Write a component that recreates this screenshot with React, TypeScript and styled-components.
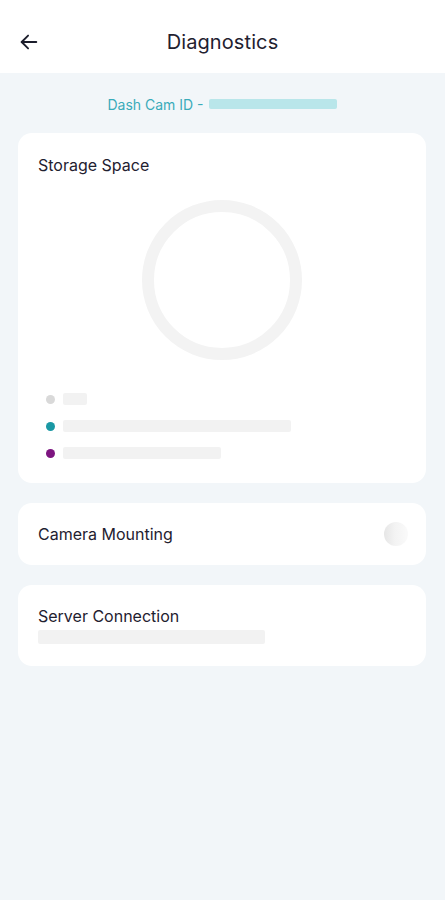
import React from 'react'
import styled, { createGlobalStyle } from 'styled-components'

const GlobalStyle = createGlobalStyle`
  html, body {
    margin: 0;
    padding: 0;
    background: #f2f6f9;
    font-family: Inter, 'Noto Sans', sans-serif;
    color: #1b1d2b;
  }
  * { box-sizing: border-box; }
`

const Screen = styled.div`
  width: 445px;
  min-height: 900px;
  background: #f2f6f9;
  display: flex;
  flex-direction: column;
`

const Header = styled.header`
  height: 73px;
  background: #ffffff;
  display: grid;
  grid-template-columns: 56px 1fr 56px;
  align-items: center;
  padding-top: 11px;
`

const BackButton = styled.button`
  border: 0;
  background: transparent;
  padding: 0 0 0 18px;
  height: 40px;
  display: flex;
  align-items: center;
  cursor: pointer;
  color: #1b1d2b;
`

const Title = styled.h1`
  margin: 0;
  text-align: center;
  font-size: 20px;
  font-weight: 400;
  letter-spacing: 0.1px;
  color: #1f2130;
`

const Content = styled.main`
  display: flex;
  flex-direction: column;
  gap: 20px;
  padding: 20px 19px 0 18px;
`

const DeviceId = styled.div`
  display: flex;
  justify-content: center;
  align-items: center;
  gap: 5px;
  height: 22px;
  margin-bottom: -2px;
  font-size: 14px;
  color: #3aabb9;
`

const BlurBar = styled.span<{ $w: number; $color?: string; $h?: number; $mt?: number }>`
  display: inline-block;
  width: ${(p) => p.$w}px;
  height: ${(p) => p.$h ?? 12}px;
  margin-top: ${(p) => p.$mt ?? 0}px;
  background: ${(p) => p.$color ?? '#f2f2f2'};
  border-radius: 2px;
`

const Card = styled.section<{ $pad?: string }>`
  background: #ffffff;
  border-radius: 14px;
  padding: ${(p) => p.$pad ?? '22px 20px'};
  display: flex;
  flex-direction: column;
`

const CardRow = styled.div`
  display: flex;
  align-items: center;
  justify-content: space-between;
`

const CardTitle = styled.h2`
  margin: 0;
  font-size: 16px;
  font-weight: 400;
  color: #1f2130;
  line-height: 20px;
`

const ChartWrap = styled.div`
  display: flex;
  justify-content: center;
  padding: 24px 0 32px;
`

const Legend = styled.ul`
  list-style: none;
  margin: 0;
  padding: 0 0 0 8px;
  display: flex;
  flex-direction: column;
  gap: 15px;
`

const LegendItem = styled.li`
  display: flex;
  align-items: center;
  gap: 8px;
  height: 12px;
`

const Dot = styled.span<{ $color: string }>`
  width: 9px;
  height: 9px;
  border-radius: 50%;
  background: ${(p) => p.$color};
`

const StatusBubble = styled.span`
  width: 24px;
  height: 24px;
  border-radius: 50%;
  margin-right: -2px;
  background: linear-gradient(90deg, #e6e6e6 0%, #f3f3f3 45%, #fafafa 100%);
`

const legend = [
  { color: '#d9d9d9', w: 24 },
  { color: '#1a98a4', w: 228 },
  { color: '#7d1580', w: 158 },
]

export default function App() {
  return (
    <>
      <GlobalStyle />
      <Screen>
        <Header>
          <BackButton aria-label="Back">
            <svg width="22" height="22" viewBox="0 0 24 24" fill="none" stroke="currentColor" strokeWidth="2" strokeLinecap="round" strokeLinejoin="round">
              <path d="M20 12H4" />
              <path d="M11 5l-7 7 7 7" />
            </svg>
          </BackButton>
          <Title>Diagnostics</Title>
          <span />
        </Header>
        <Content>
          <DeviceId>
            Dash Cam ID -
            <BlurBar $w={128} $h={10} $color="#b9e6ea" />
          </DeviceId>

          <Card $pad="22px 20px 24px">
            <CardTitle>Storage Space</CardTitle>
            <ChartWrap>
              <svg width="162" height="162" viewBox="0 0 162 162">
                <circle cx="81" cy="81" r="74" fill="none" stroke="#f3f3f3" strokeWidth="12" />
              </svg>
            </ChartWrap>
            <Legend>
              {legend.map((l) => (
                <LegendItem key={l.color}>
                  <Dot $color={l.color} />
                  <BlurBar $w={l.w} />
                </LegendItem>
              ))}
            </Legend>
          </Card>

          <Card $pad="19px 20px">
            <CardRow>
              <CardTitle>Camera Mounting</CardTitle>
              <StatusBubble />
            </CardRow>
          </Card>

          <Card $pad="21px 20px 22px">
            <CardTitle>Server Connection</CardTitle>
            <BlurBar $w={227} $h={14} $mt={4} />
          </Card>
        </Content>
      </Screen>
    </>
  )
}
